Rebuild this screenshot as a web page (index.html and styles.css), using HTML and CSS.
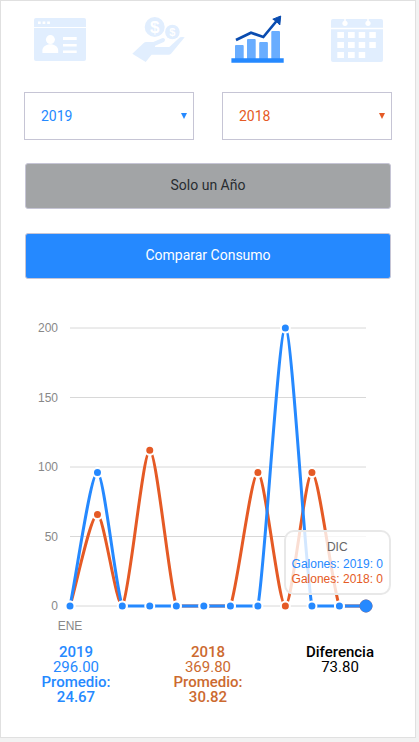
FILE: index.html
```html
<!DOCTYPE html>
<html lang="es">
<head>
  <meta charset="UTF-8" />
  <meta name="viewport" content="width=device-width, initial-scale=1.0"/>
  <title>Comparar Consumo</title>
  <link rel="stylesheet" href="styles.css">
</head>
<body>
  <main class="card">
    <nav class="tabs">
      <a href="#cuenta" class="tab" aria-label="Cuenta">
        <svg width="63" height="50" viewBox="0 0 63 50">
          <rect x="6" y="5" width="52" height="43" rx="2" fill="#e1eefe"/>
          <path d="M6 14.5H58" stroke="#fff"/>
          <path d="M10 8.4h2.7v2.6H10zM14.6 8.4h2.7v2.6h-2.7zM19.2 8.4h2.7v2.6h-2.7z" fill="#fff"/>
          <circle cx="22.4" cy="26.6" r="4.5" fill="#fff"/>
          <path d="M14.4 40v-2.5c0-3.8 4-6.2 8-6.2s7.8 2.4 7.8 6.2V40z" fill="#fff"/>
          <path d="M35 24h13.7v3H35zM35 31h13.7v2.4H35zM35 37.6h13.7V40H35z" fill="#fff"/>
        </svg>
      </a>
      <a href="#pagos" class="tab" aria-label="Pagos">
        <svg width="63" height="50" viewBox="0 0 63 50">
          <g fill="#e1eefe">
            <circle cx="27.7" cy="14" r="10"/>
            <circle cx="45.4" cy="19" r="7.3"/>
            <path d="M5.3 40.7L17.3 29.5Q18 29 19 29H26.3L35 25.2Q37.7 24.6 38 26.6Q38 28.2 36.8 28.9L28 32.7V34H42.3L53 24.3Q55 23.5 57.7 24.3L44 40.7Q43 41.7 41.5 41.7H24.5L18.7 49z"/>
          </g>
          <text x="27.7" y="20" class="coin coin-lg">$</text>
          <text x="45.4" y="23" class="coin">$</text>
        </svg>
      </a>
      <a href="#consumo" class="tab" aria-label="Consumo" aria-current="page">
        <svg width="63" height="50" viewBox="0 0 63 50">
          <path d="M9 33q0-1 1-1h6.7q1 0 1 1v13H9zM21 27q0-1 1-1h6.7q1 0 1 1v19H21zM33.2 30q0-1 1-1h6.7q1 0 1 1v16h-8.7zM45.3 19q0-1 1-1H53q1 0 1 1v27h-8.7z" fill="#69adff"/>
          <path d="M5.4 45.3H57.7v4.4H5.4z" fill="#2589ff"/>
          <path d="M10 27L25 19.7L37.3 24L51 7.5" fill="none" stroke="#0a4cb0" stroke-width="2.7"/>
          <path d="M54.7 3L46.8 6.2L50.4 8.3L53.8 12z" fill="#0a4cb0" stroke="#0a4cb0"/>
        </svg>
      </a>
      <a href="#calendario" class="tab" aria-label="Calendario">
        <svg width="63" height="50" viewBox="0 0 63 50">
          <rect x="6" y="6" width="52" height="43" rx="2" fill="#e1eefe"/>
          <path d="M6 15.5H58M20 5v5M43 5v5" stroke="#fff" stroke-width="1.5"/>
          <g fill="#fff">
            <circle cx="20" cy="10.3" r="2.6"/>
            <circle cx="43" cy="10.3" r="2.6"/>
            <path d="M12.3 19H19v6h-6.7zM23 19h6.7v6H23zM33.7 19h6.5v6h-6.5zM44.3 19h6.5v6h-6.5z"/>
            <path d="M12.3 29H19v6h-6.7zM23 29h6.7v6H23zM33.7 29h6.5v6h-6.5zM44.3 29h6.5v6h-6.5z"/>
            <path d="M12.3 39H19v6h-6.7zM23 39h6.7v6H23zM33.7 39h6.5v6h-6.5z"/>
          </g>
        </svg>
      </a>
    </nav>

    <form class="filters">
      <div class="years">
        <div class="year current">
          <select id="year1" name="year1" aria-label="Año">
            <option>2019</option>
            <option>2018</option>
          </select>
        </div>
        <div class="year previous">
          <select id="year2" name="year2" aria-label="Año a comparar">
            <option>2018</option>
            <option>2019</option>
          </select>
        </div>
      </div>
      <button type="button" class="btn btn-gray">Solo un Año</button>
      <button type="button" class="btn btn-blue">Comparar Consumo</button>
    </form>

    <div class="chart">
      <svg id="graph" class="graph" role="img" aria-label="Galones por mes"></svg>
      <div class="hover">
        <div class="hover-label">DIC</div>
        <div class="current">Galones: 2019: 0</div>
        <div class="previous">Galones: 2018: 0</div>
      </div>
    </div>

    <div class="totals">
      <div class="total current">
        <b>2019</b>
        <span>296.00</span>
        <b>Promedio:</b>
        <b>24.67</b>
      </div>
      <div class="total last-year">
        <b>2018</b>
        <span>369.80</span>
        <b>Promedio:</b>
        <b>30.82</b>
      </div>
      <div class="total">
        <b>Diferencia</b>
        <span>73.80</span>
      </div>
    </div>
  </main>
  <script src="chart.js"></script>
</body>
</html>
```

FILE: styles.css
```css
body {
  margin: 0;
  background: #f2f2f2;
  font-family: Roboto, sans-serif;
  font-size: 14px;
}

.card {
  margin: 0 3px 4px 0;
  padding: 12px 9px 32px;
  border: 1px solid #e0e0e0;
  background: #fff;
}

.tabs {
  display: grid;
  grid-template-columns: repeat(4, 1fr);
}

.tab {
  display: flex;
  justify-content: center;
}

.coin {
  fill: #fff;
  font: bold 11px "Liberation Sans", Arial, sans-serif;
  text-anchor: middle;
}

.coin-lg {
  font-size: 17px;
}

.current {
  color: #2589ff;
}

.previous {
  color: #e55a25;
}

.last-year {
  color: #cc6a30;
}

/* Filters */
.filters {
  display: flex;
  flex-direction: column;
  gap: 24px;
  margin-top: 29px;
  padding: 0 15px;
}

.years {
  display: grid;
  grid-template-columns: 1fr 1fr;
  gap: 28px;
  margin: 0 -1px -1px;
}

.year {
  position: relative;
}

.year::after {
  content: "";
  position: absolute;
  right: 7px;
  top: 21px;
  border: 3px solid transparent;
  border-top: 6px solid currentColor;
  border-bottom: 0;
  pointer-events: none;
}

.year select {
  display: block;
  width: 100%;
  height: 48px;
  padding: 0 16px;
  border: 1px solid #c6c5d5;
  border-radius: 0;
  background: #fff;
  color: inherit;
  font: inherit;
  appearance: none;
}

.btn {
  height: 46px;
  padding: 0 6px 2px;
  border: 1px solid #c6c5d5;
  border-radius: 3px;
  font: inherit;
  cursor: pointer;
}

.btn-gray {
  background: #a2a4a6;
  color: #282c30;
}

.btn-blue {
  background: #2589ff;
  color: #fff;
}

/* Chart */
.chart {
  position: relative;
  margin: 24px 15px 0;
  font: 12px "Liberation Sans", Arial, sans-serif;
}

.graph {
  display: block;
  width: 100%;
  height: 342px;
}

.graph text {
  fill: #888;
}

.hover {
  position: absolute;
  top: 227px;
  right: 0;
  padding: 6px;
  border: 2px solid #e8e8e8;
  border-radius: 10px;
  background: rgba(255, 255, 255, 0.8);
  line-height: 15px;
  text-align: center;
  white-space: nowrap;
}

.hover-label {
  margin: 2px 0;
  color: #666;
}

/* Totals */
.totals {
  display: grid;
  grid-template-columns: repeat(3, 1fr);
  font-size: 15px;
  line-height: 15px;
  text-align: center;
}

.total {
  display: flex;
  flex-direction: column;
}

.total b {
  font-weight: 500;
}
```

FILE: chart.js
```js
const svg = document.getElementById("graph");
const days = [31, 28, 31, 30, 31, 30, 31, 31, 30, 31, 30];
const series = [
  { color: "#e55a25", values: [0, 65.8, 0, 112, 0, 0, 0, 96, 0, 96, 0, 0] },
  { color: "#2589ff", values: [0, 96, 0, 0, 0, 0, 0, 0, 200, 0, 0, 0] }
];
const left = 45, top_ = 25, bottom = 303, max = 200;

function add(name, attrs, text) {
  const el = document.createElementNS("http://www.w3.org/2000/svg", name);
  for (const key in attrs) el.setAttribute(key, attrs[key]);
  if (text !== undefined) el.textContent = text;
  svg.appendChild(el);
}

function yPos(value) {
  return bottom - value / max * (bottom - top_);
}

// smooth line that never dips under the axis
function linePath(points) {
  const grads = points.map((p, i) => {
    const a = points[i - 1] || p;
    const b = points[i + 1] || p;
    return (b.y - a.y) / (b.x - a.x);
  });
  let path = `M${points[0].x},${points[0].y}`;
  for (let i = 1; i < points.length; i++) {
    const a = points[i - 1], b = points[i];
    const ix = (b.x - a.x) / 4;
    const y1 = Math.min(bottom, a.y + ix * grads[i - 1]);
    const y2 = Math.min(bottom, b.y - ix * grads[i]);
    path += `C${a.x + ix},${y1},${b.x - ix},${y2},${b.x},${b.y}`;
  }
  return path;
}

function draw() {
  svg.innerHTML = "";
  const right = svg.clientWidth - 25;
  const total = days.reduce((sum, d) => sum + d, 0);
  const xs = [left];
  days.forEach((d, i) => xs.push(xs[i] + d / total * (right - left)));

  for (let value = 0; value <= max; value += 50) {
    const y = yPos(value);
    add("path", { d: `M${left},${y}H${right}`, stroke: "#d8d8d8" });
    add("text", { x: left - 12, y: y + 4, "text-anchor": "end" }, value);
  }
  add("text", { x: left, y: bottom + 24, "text-anchor": "middle" }, "ENE");

  const lines = series.map(s => s.values.map((v, i) => ({ x: xs[i], y: yPos(v) })));
  lines.forEach((points, n) => {
    add("path", { d: linePath(points), fill: "none", stroke: series[n].color, "stroke-width": 3 });
  });
  lines.forEach((points, n) => {
    const color = series[n].color;
    points.forEach((p, i) => {
      // the hovered month gets a bigger dot
      const active = i === points.length - 1;
      add("circle", {
        cx: p.x,
        cy: p.y,
        r: active ? 6 : 4.5,
        fill: color,
        stroke: active ? color : "#fff",
        "stroke-width": active ? 1 : 2
      });
    });
  });
}

draw();
window.addEventListener("resize", draw);
```
